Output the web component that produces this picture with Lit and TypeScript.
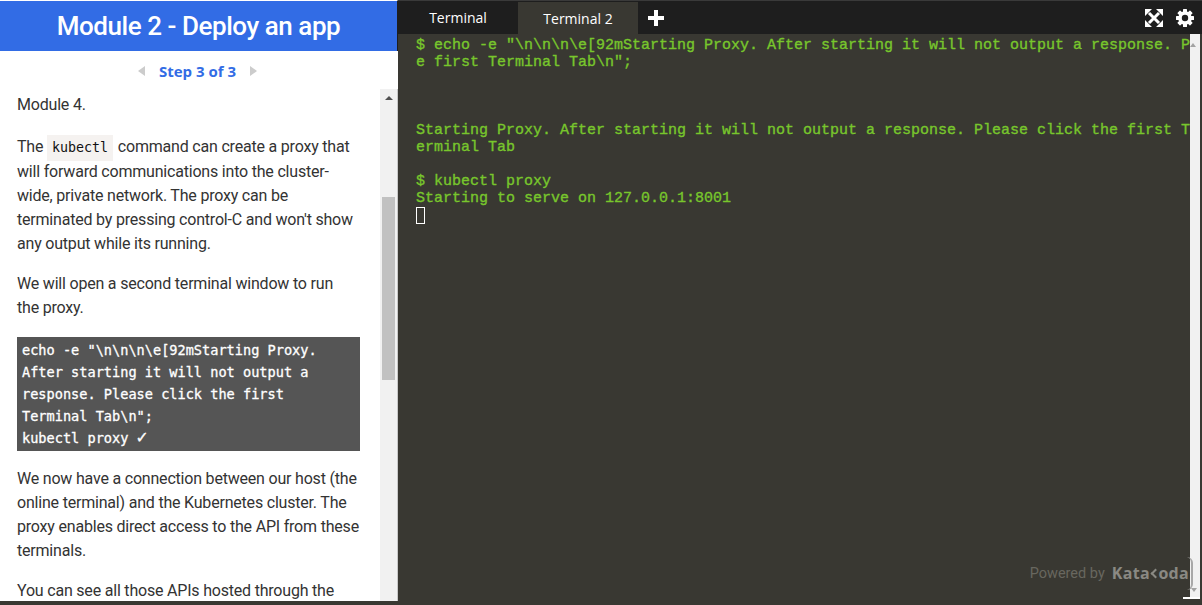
import { LitElement, html, css, svg } from "lit";
import { customElement } from "lit/decorators.js";

const teeth = [0, 45, 90, 135, 180, 225, 270, 315].map(
  (a) => svg`<rect x="7" y="0" width="4" height="5" rx="0.6" fill="#fff" transform="rotate(${a} 9 9)"></rect>`
);

@customElement("app-root")
export class AppRoot extends LitElement {
  static styles = css`
    :host { display: flex; width: 1202px; height: 605px; overflow: hidden; background: #393832; font-family: "Liberation Sans", Arial, sans-serif; }
    .left { width: 398px; flex: none; display: flex; flex-direction: column; height: 601px; background: #fff; }
    .head { height: 51px; box-sizing: border-box; flex: none; border-top: 1px solid #fff; background: #326ce5; border-right: 1px solid #1e1e1e; color: #fff; font-family: Roboto, "Liberation Sans", sans-serif; font-weight: 500; font-size: 26px; letter-spacing: -0.45px; display: flex; align-items: center; justify-content: center; }
    .step { height: 38px; box-sizing: border-box; padding: 1px 3px 0 0; flex: none; display: flex; align-items: center; justify-content: center; gap: 14px; color: #326ce5; font-family: "Open Sans", sans-serif; font-weight: 700; font-size: 15px; }
    .step span.txt { margin-top: 1px; }
    .tri-l { width: 0; height: 0; border: 5.5px solid transparent; border-left-width: 0; border-right: 7px solid #ccc; }
    .tri-r { width: 0; height: 0; border: 5.5px solid transparent; border-right-width: 0; border-left: 7px solid #ccc; }
    .body { flex: 1; min-height: 0; display: flex; border-right: 1px solid #c8c8c8; }
    .content { flex: 1; min-width: 0; overflow: hidden; padding: 4px 20px 0 17px; color: #333; font-family: Roboto, "Liberation Sans", sans-serif; font-size: 16px; line-height: 24px; letter-spacing: -0.2px; }
    p { margin: 0 0 16px; }
    p.first { margin-bottom: 18px; }
    p.before { margin-bottom: 17px; }
    code { font-family: "DejaVu Sans Mono", monospace; font-size: 13.3px; background: #f5f2f0; color: #111; padding: 5px 5px 6px; margin: 0 1px 0 0; letter-spacing: 0; }
    pre { margin: 0 0 16px; background: #555; color: #fff; font-family: "DejaVu Sans Mono", monospace; font-size: 13.6px; line-height: 22px; padding: 2px 5px; white-space: pre-wrap; letter-spacing: 0; font-weight: 400; -webkit-text-stroke: 0.3px #fff; }
    .check { font-size: 18px; line-height: 0; }
    .sb { width: 17px; flex: none; background: #f1f1f1; display: flex; flex-direction: column; align-items: center; }
    .arrow { margin-top: 7px; width: 0; height: 0; border: 4px solid transparent; border-top-width: 0; border-bottom: 4px solid #505050; }
    .thumb { width: 13px; height: 183px; background: #c1c1c1; margin-top: 97px; }
    .right { flex: 1; min-width: 0; display: flex; flex-direction: column; background: #393832; height: 605px; }
    .tabs { height: 34px; flex: none; background: #1e1e1e; display: flex; align-items: stretch; color: #fff; font-family: "Open Sans", sans-serif; font-size: 14px; border-top: 1px solid #3a3a3a; box-sizing: border-box; }
    .tab { display: flex; align-items: center; justify-content: center; }
    .t1 { width: 120px; }
    .t2 { width: 120px; background: #393832; margin-top: 1px; }
    .plus { width: 36px; }
    .spacer { flex: 1; }
    .icons { display: flex; align-items: center; gap: 13px; padding-right: 8px; }
    .term { flex: 1; min-height: 0; position: relative; display: flex; align-items: flex-start; }
    .out { flex: 1; min-width: 0; height: 100%; box-sizing: border-box; overflow: hidden; padding: 3px 0 0 18px; color: #78c62c; font-family: "Liberation Mono", monospace; font-weight: 400; -webkit-text-stroke: 0.35px #78c62c; font-size: 15px; line-height: 17px; white-space: pre; }
    .cursor { display: block; width: 7px; height: 15px; border: 1px solid #fff; margin-top: 0; }
    .tsb { width: 10px; margin-right: 2px; flex: none; background: #f1f1f1; height: 565px; }
    .up { position: absolute; right: 6px; top: 9px; width: 0; height: 0; border: 3.5px solid transparent; border-top-width: 0; border-bottom: 4px solid #a3a3a3; }
    .down { position: absolute; right: 5px; top: 554px; width: 0; height: 0; border: 3.5px solid transparent; border-bottom-width: 0; border-top: 4px solid #a3a3a3; }
    .curve { position: absolute; right: 9px; top: 523px; width: 6px; height: 33px; box-sizing: border-box; border-right: 2px solid #a8a8a8; border-radius: 0 6px 6px 0; }
    .strip { position: absolute; right: 2px; top: 563px; width: 17px; height: 2px; background: #fff; }
    .powered { position: absolute; right: 13px; bottom: 21px; display: flex; align-items: center; gap: 7px; color: #68675f; font-family: Roboto, sans-serif; font-size: 14.5px; }
    .logo { font-family: "Open Sans", sans-serif; font-weight: 700; font-size: 16px; color: #8a8983; letter-spacing: 0.3px; }
    .c { position: relative; color: transparent; }
    .c::after { content: ""; position: absolute; left: 2px; top: 8px; width: 7px; height: 7px; border-left: 2px solid #8a8983; border-bottom: 2px solid #8a8983; transform: rotate(45deg); box-sizing: border-box; }
  `;

  render() {
    return html`
      <div class="left">
        <div class="head">Module 2 - Deploy an app</div>
        <div class="step"><span class="tri-l"></span><span class="txt">Step 3 of 3</span><span class="tri-r"></span></div>
        <div class="body">
          <div class="content">
            <p class="first">Module 4.</p>
            <p>The <code>kubectl</code> command can create a proxy that will forward communications into the cluster-wide, private network. The proxy can be terminated by pressing control-C and won't show any output while its running.</p>
            <p class="before">We will open a second terminal window to run<br />the proxy.</p>
            <pre>echo -e "\\n\\n\\n\\e[92mStarting Proxy.
After starting it will not output a
response. Please click the first
Terminal Tab\\n";
kubectl proxy <span class="check">✓</span></pre>
            <p>We now have a connection between our host (the online terminal) and the Kubernetes cluster. The proxy enables direct access to the API from these terminals.</p>
            <p>You can see all those APIs hosted through the</p>
          </div>
          <div class="sb"><i class="arrow"></i><div class="thumb"></div></div>
        </div>
      </div>
      <div class="right">
        <div class="tabs">
          <div class="tab t1">Terminal</div>
          <div class="tab t2">Terminal 2</div>
          <div class="tab plus">
            <svg width="16" height="16" viewBox="0 0 16 16"><path d="M8 0v16M0 8h16" stroke="#fff" stroke-width="4"/></svg>
          </div>
          <div class="spacer"></div>
          <div class="icons">
            <svg width="18" height="18" viewBox="0 0 18 18" fill="#fff">
              <path d="M4 4L14 14M14 4L4 14" stroke="#fff" stroke-width="3"/>
              <path d="M0 0h7L0 7zM18 0v7L11 0zM0 18v-7l7 7zM18 18h-7l7-7z"/>
            </svg>
            <svg width="18" height="18" viewBox="0 0 18 18">
              ${teeth}
              <circle cx="9" cy="9" r="5" fill="none" stroke="#fff" stroke-width="3.6"/>
            </svg>
          </div>
        </div>
        <div class="term">
          <div class="out">$ echo -e "\\n\\n\\n\\e[92mStarting Proxy. After starting it will not output a response. Please click the first Terminal Tab\\n";
e first Terminal Tab\\n";



Starting Proxy. After starting it will not output a response. Please click the first Terminal Tab
erminal Tab

$ kubectl proxy
Starting to serve on 127.0.0.1:8001
<span class="cursor"></span></div>
          <div class="tsb"></div>
          <i class="up"></i>
          <i class="curve"></i>
          <i class="down"></i>
          <i class="strip"></i>
          <div class="powered"><span>Powered by</span><span class="logo">Kata<span class="c">c</span>oda</span></div>
        </div>
      </div>
    `;
  }
}
